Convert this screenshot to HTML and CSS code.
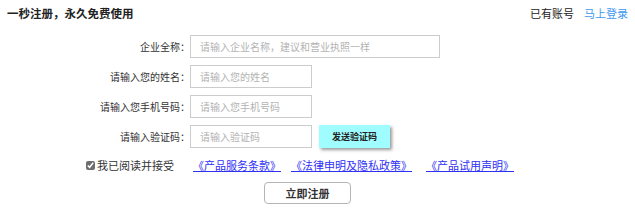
FILE: index.html
```html
<!DOCTYPE html>
<html lang="zh-CN">
<head>
    <meta charset="UTF-8">
    <title>注册</title>
    <link rel="stylesheet" href="styles.css">
</head>
<body>
    <div class="header">
        <div class="title">一秒注册，永久免费使用</div>
        <div class="account">已有账号<a href="#" class="login-link">马上登录</a></div>
    </div>
    <form class="reg-form">
        <div class="form-row">
            <label for="company">企业全称：</label>
            <input type="text" id="company" class="wide" placeholder="请输入企业名称，建议和营业执照一样">
        </div>
        <div class="form-row">
            <label for="name">请输入您的姓名：</label>
            <input type="text" id="name" placeholder="请输入您的姓名">
        </div>
        <div class="form-row">
            <label for="phone">请输入您手机号码：</label>
            <input type="text" id="phone" placeholder="请输入您手机号码">
        </div>
        <div class="form-row">
            <label for="code">请输入验证码：</label>
            <input type="text" id="code" placeholder="请输入验证码">
            <button type="button" class="send-btn">发送验证码</button>
        </div>
        <div class="agree-row">
            <input type="checkbox" id="agree" checked>
            <label for="agree" class="agree-text">我已阅读并接受</label>
            <a href="#" class="doc-link first">《产品服务条款》</a>
            <a href="#" class="doc-link">《法律申明及隐私政策》</a>
            <a href="#" class="doc-link last">《产品试用声明》</a>
        </div>
        <div class="submit-row">
            <button type="submit" class="reg-btn">立即注册</button>
        </div>
    </form>
</body>
</html>
```

FILE: styles.css
```css
* {
    margin: 0;
    padding: 0;
    box-sizing: border-box;
}

body {
    font-family: "Noto Sans CJK SC", "Liberation Sans", sans-serif;
    color: #333;
    background-color: #fff;
}

.header {
    display: flex;
    justify-content: space-between;
    align-items: center;
    height: 26px;
    padding: 0 7px;
}

.title {
    font-size: 11.5px;
    font-weight: bold;
    color: #222;
}

.account {
    font-size: 11px;
    color: #222;
}

.login-link {
    margin-left: 10px;
    color: #3d9af0;
    text-decoration: none;
}

.reg-form {
    padding-top: 9px;
}

.form-row {
    display: flex;
    align-items: center;
    height: 23px;
    margin-bottom: 7px;
}

.form-row label {
    width: 190px;
    text-align: right;
    font-size: 10px;
    color: #333;
}

.form-row input {
    width: 122px;
    height: 23px;
    padding: 0 9px;
    border: 1px solid #ccc;
    font-family: inherit;
    font-size: 10px;
    color: #333;
    outline: none;
}

.form-row input.wide {
    width: 250px;
}

.form-row input::placeholder {
    color: #b3b3b3;
}

.send-btn {
    width: 71px;
    height: 23px;
    margin-left: 7px;
    border: none;
    background-color: #a0fdff;
    box-shadow: 2px 2px 3px #9a9a9a;
    font-family: inherit;
    font-size: 9px;
    font-weight: bold;
    color: #222;
    cursor: pointer;
}

.agree-row {
    display: flex;
    align-items: center;
    height: 18px;
    padding-left: 86px;
    margin-top: 8px;
    font-size: 11px;
}

.agree-row input {
    width: 9px;
    height: 9px;
    margin-right: 2px;
    accent-color: #6e6e6e;
}

.agree-text {
    color: #333;
}

.doc-link {
    margin-left: 10px;
    color: #3030f5;
}

.doc-link.first {
    margin-left: 19px;
}

.doc-link.last {
    margin-left: 14px;
}

.submit-row {
    padding-left: 264px;
    margin-top: 5px;
}

.reg-btn {
    width: 87px;
    height: 22px;
    border: 1px solid #b5b5b5;
    border-radius: 4px;
    background-color: #fff;
    font-family: inherit;
    font-size: 11px;
    font-weight: bold;
    color: #333;
    cursor: pointer;
}
```
